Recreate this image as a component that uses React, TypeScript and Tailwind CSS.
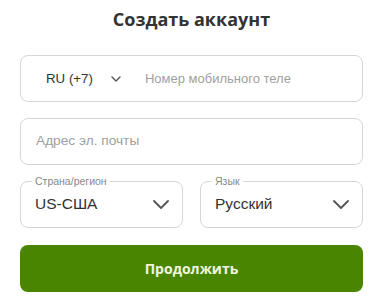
import React from "react";

function Chevron({ w, h, sw, className }: { w: number; h: number; sw: number; className?: string }) {
  return (
    <svg width={w + 2} height={h + 2} viewBox={`0 0 ${w + 2} ${h + 2}`} fill="none" stroke="currentColor" strokeWidth={sw} strokeLinecap="round" strokeLinejoin="round" className={className}>
      <path d={`M1 1 L${(w + 2) / 2} ${h + 1} L${w + 1} 1`} />
    </svg>
  );
}

export default function App() {
  return (
    <div className="w-[386px] h-[305px] bg-white flex flex-col items-start pl-[20px] font-['Liberation_Sans',Arial,sans-serif]">
      <h1 className="w-[343px] text-center h-[38px] pt-[6px] text-[18px] leading-[26px] font-bold text-[#333333] font-['Open_Sans',sans-serif]">
        Создать аккаунт
      </h1>
      <div className="mt-[17px] w-[343px] h-[47px] border border-[#d6d6d6] rounded-[8px] flex items-center">
        <span className="ml-[25px] text-[13.3px] text-[#333333]">RU (+7)</span>
        <Chevron w={8} h={4} sw={1.4} className="ml-[18px] mt-[1px] text-[#555]" />
        <span className="ml-[24px] text-[13px] text-[#9f9f9f]">Номер мобильного теле</span>
      </div>
      <div className="mt-[16px] w-[343px] h-[47px] border border-[#d6d6d6] rounded-[8px] flex items-center">
        <span className="ml-[15px] text-[13.7px] text-[#9f9f9f]">Адрес эл. почты</span>
      </div>
      <div className="mt-[10px] w-[343px] flex gap-[17px]">
        <fieldset className="w-[163px] h-[53px] border border-[#d6d6d6] rounded-[8px] px-[14px] flex items-center">
          <legend className="ml-[-3px] px-[3px] text-[10.5px] leading-[12px] text-[#888]">Страна/регион</legend>
          <div className="flex items-center justify-between w-full -mt-[6px]">
            <span className="text-[15.5px] text-[#333333]">US-США</span>
            <Chevron w={14} h={7} sw={1.8} className="text-[#555] mr-[-1px]" />
          </div>
        </fieldset>
        <fieldset className="w-[163px] h-[53px] border border-[#d6d6d6] rounded-[8px] px-[14px] flex items-center">
          <legend className="ml-[-3px] px-[3px] text-[10.5px] leading-[12px] text-[#888]">Язык</legend>
          <div className="flex items-center justify-between w-full -mt-[6px]">
            <span className="text-[15.5px] text-[#333333]">Русский</span>
            <Chevron w={14} h={7} sw={1.8} className="text-[#555] mr-[-1px]" />
          </div>
        </fieldset>
      </div>
      <button className="mt-[17px] w-[343px] h-[47px] rounded-[8px] bg-[#4a8500] text-[#eef7e0] text-[14px] font-bold font-['Open_Sans',sans-serif]">
        Продолжить
      </button>
    </div>
  );
}
